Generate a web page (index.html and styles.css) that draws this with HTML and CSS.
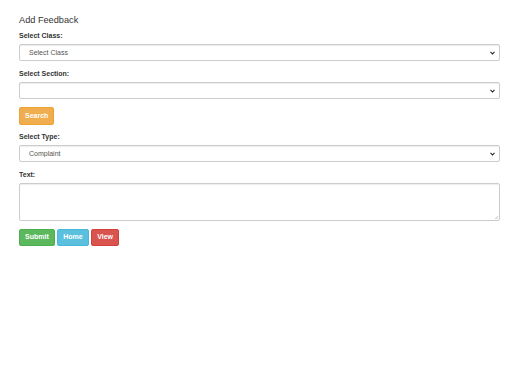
FILE: index.html
```html
<!DOCTYPE html>
<html>
<head>
<meta charset="utf-8">
<link rel="stylesheet" href="styles.css">
</head>
<body>
<div class="container">
  <h4 class="title">Add Feedback</h4>
  <div class="form-group">
    <label class="lbl">Select Class:</label>
    <div class="select-wrap">
      <select class="control"><option>Select Class</option></select>
      <svg class="caret" width="5" height="4" viewBox="0 0 5 4"><path d="M0.5 0.8 L2.5 3 L4.5 0.8" fill="none" stroke="#222" stroke-width="1.1"/></svg>
    </div>
  </div>
  <div class="form-group">
    <label class="lbl">Select Section:</label>
    <div class="select-wrap">
      <select class="control"><option></option></select>
      <svg class="caret" width="5" height="4" viewBox="0 0 5 4"><path d="M0.5 0.8 L2.5 3 L4.5 0.8" fill="none" stroke="#222" stroke-width="1.1"/></svg>
    </div>
  </div>
  <div class="form-group search-group">
    <div class="btn-row"><button class="btn btn-warning">Search</button></div>
  </div>
  <div class="form-group">
    <label class="lbl">Select Type:</label>
    <div class="select-wrap">
      <select class="control"><option>Complaint</option></select>
      <svg class="caret" width="5" height="4" viewBox="0 0 5 4"><path d="M0.5 0.8 L2.5 3 L4.5 0.8" fill="none" stroke="#222" stroke-width="1.1"/></svg>
    </div>
  </div>
  <div class="form-group">
    <label class="lbl">Text:</label>
    <div class="select-wrap">
      <textarea class="control area"></textarea>
      <svg class="grip" width="3" height="3" viewBox="0 0 3 3"><path d="M0 3 L3 0 M1.6 3 L3 1.6" stroke="#aaa" stroke-width="0.6"/></svg>
    </div>
  </div>
  <div class="btn-row">
    <button class="btn btn-success">Submit</button>
    <button class="btn btn-info">Home</button>
    <button class="btn btn-danger">View</button>
  </div>
</div>
</body>
</html>
```
FILE: styles.css
```css
html, body {
  margin: 0;
  padding: 0;
  background: #fff;
}
body {
  font-family: "Liberation Sans", Arial, Helvetica, sans-serif;
  color: #333;
  font-size: 7px;
  line-height: 10px;
}
.container {
  padding: 15px 12px 0 19px;
  display: flex;
  flex-direction: column;
}
.title {
  margin: 0 0 6px 0;
  font-size: 9.2px;
  line-height: 10px;
  font-weight: normal;
  color: #333;
}
.form-group {
  display: flex;
  flex-direction: column;
  margin-bottom: 8px;
}
.search-group {
  margin-bottom: 7px;
}
.lbl {
  display: block;
  font-weight: bold;
  font-size: 7px;
  line-height: 10px;
  margin-bottom: 3px;
  color: #333;
}
.select-wrap {
  position: relative;
  display: flex;
}
.caret {
  position: absolute;
  right: 5px;
  top: 7px;
  pointer-events: none;
}
.grip {
  position: absolute;
  right: 2px;
  bottom: 2px;
  pointer-events: none;
}
.control {
  box-sizing: border-box;
  width: 100%;
  height: 17px;
  margin: 0;
  padding: 0 9px;
  font-family: "Liberation Sans", Arial, Helvetica, sans-serif;
  font-size: 7px;
  color: #555;
  background-color: #fff;
  border: 1px solid #ccc;
  border-radius: 2px;
  box-shadow: inset 0 1px 1px rgba(0,0,0,.075);
  -webkit-appearance: none;
  appearance: none;
  outline: none;
}
.area {
  height: 38px;
  resize: none;
  padding: 3px 6px;
}
.btn-row {
  display: flex;
  gap: 2.5px;
}
.btn {
  box-sizing: border-box;
  height: 17.5px;
  margin: 0;
  padding: 0 5px;
  font-family: "Liberation Sans", Arial, Helvetica, sans-serif;
  font-size: 7px;
  font-weight: bold;
  line-height: 10px;
  color: #fff;
  border: 1px solid transparent;
  border-radius: 2px;
  cursor: pointer;
}
.btn-warning { background: #f0ad4e; border-color: #eea236; }
.btn-success { background: #5cb85c; border-color: #4cae4c; }
.btn-info { background: #5bc0de; border-color: #46b8da; }
.btn-danger { background: #d9534f; border-color: #d43f3a; }
```
